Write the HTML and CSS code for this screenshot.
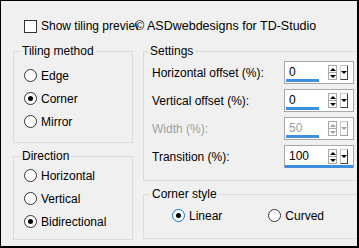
FILE: index.html
```html
<!DOCTYPE html>
<html lang="en">
<head>
  <meta charset="UTF-8" />
  <title>Tiling</title>
  <link rel="stylesheet" href="styles.css">
</head>
<body>
  <div class="window">
    <!-- top row: preview toggle + credit -->
    <div class="top-row">
      <label class="check">
        <span class="box"></span>
        <span class="check-text">Show tiling preview</span>
      </label>
      <span class="credit">© ASDwebdesigns for TD-Studio</span>
    </div>

    <div class="columns">
      <div class="col-left">
        <fieldset class="group tiling">
          <legend>Tiling method</legend>
          <div class="radio"><span class="dot"></span>Edge</div>
          <div class="radio"><span class="dot on"></span>Corner</div>
          <div class="radio"><span class="dot"></span>Mirror</div>
        </fieldset>

        <fieldset class="group direction">
          <legend>Direction</legend>
          <div class="radio"><span class="dot"></span>Horizontal</div>
          <div class="radio"><span class="dot"></span>Vertical</div>
          <div class="radio"><span class="dot on"></span>Bidirectional</div>
        </fieldset>
      </div>

      <div class="col-right">
        <fieldset class="group settings">
          <legend>Settings</legend>
          <div class="field">
            <span class="field-label">Horizontal offset (%):</span>
            <div class="spin">
              <span class="value">0</span>
              <span class="arrows"><i class="up"></i><i class="down"></i></span>
              <span class="drop"><i class="down"></i></span>
              <span class="bar"></span>
            </div>
          </div>
          <div class="field">
            <span class="field-label">Vertical offset (%):</span>
            <div class="spin">
              <span class="value">0</span>
              <span class="arrows"><i class="up"></i><i class="down"></i></span>
              <span class="drop"><i class="down"></i></span>
              <span class="bar"></span>
            </div>
          </div>
          <div class="field disabled">
            <span class="field-label">Width (%):</span>
            <div class="spin">
              <span class="value">50</span>
              <span class="arrows"><i class="up"></i><i class="down"></i></span>
              <span class="drop"><i class="down"></i></span>
              <span class="bar"></span>
            </div>
          </div>
          <div class="field">
            <span class="field-label">Transition (%):</span>
            <div class="spin">
              <span class="value">100</span>
              <span class="arrows"><i class="up"></i><i class="down"></i></span>
              <span class="drop"><i class="down"></i></span>
              <span class="bar full"></span>
            </div>
          </div>
        </fieldset>

        <fieldset class="group corner">
          <legend>Corner style</legend>
          <div class="radio-row">
            <div class="radio"><span class="dot on focus"></span>Linear</div>
            <div class="radio"><span class="dot"></span>Curved</div>
          </div>
        </fieldset>
      </div>
    </div>
  </div>
</body>
</html>
```

FILE: styles.css
```css
body {
  margin: 0;
  font-family: "Liberation Sans", Arial, sans-serif;
  font-size: 12px;
  color: #000;
}

.window {
  width: 359px;
  height: 248px;
  box-sizing: border-box;
  border: 1px solid #000;
  border-right-width: 2px;
  border-bottom-width: 2px;
  background: #f0f0f0;
  overflow: hidden;
  position: relative;
}

/* top row */
.top-row {
  display: flex;
  align-items: center;
  height: 16px;
  margin-top: 17px;
  padding-left: 23px;
}

.check {
  display: flex;
  align-items: center;
  width: 114px;
  overflow: hidden;
  white-space: nowrap;
}

.box {
  flex: none;
  width: 11px;
  height: 11px;
  border: 1px solid #333;
  background: #fff;
  margin-right: 4px;
}

.credit {
  font-size: 12.5px;
  margin-left: -3px;
  white-space: nowrap;
}

/* columns */
.columns {
  display: grid;
  grid-template-columns: 120px 230px;
  column-gap: 10px;
  margin-top: 9px;
  margin-left: 12px;
}

.col-left, .col-right {
  display: flex;
  flex-direction: column;
  gap: 5px;
}

.group {
  margin: 0;
  padding: 0 0 0 10px;
  border: 1px solid #dcdcdc;
  box-sizing: border-box;
  min-width: 0;
}

.group legend {
  padding: 0 2px;
  margin-left: -4px;
  line-height: 16px;
}

.tiling { height: 100px; padding-top: 5px; }
.direction { height: 92px; }
.settings { height: 138px; padding-left: 8px; }
.corner { height: 53px; padding-top: 2px; }

/* radios */
.radio {
  display: flex;
  align-items: center;
  height: 23px;
  white-space: nowrap;
}

.dot {
  flex: none;
  width: 11px;
  height: 11px;
  border: 1px solid #333;
  border-radius: 50%;
  background: #fff;
  margin-right: 4px;
  position: relative;
}

.dot.on::after {
  content: "";
  position: absolute;
  left: 3px;
  top: 3px;
  width: 5px;
  height: 5px;
  border-radius: 50%;
  background: #000;
}

.dot.focus { border-color: #0078d7; }

.radio-row {
  display: flex;
  gap: 46px;
  margin-left: 18px;
}

/* settings fields */
.field {
  display: flex;
  align-items: center;
  justify-content: space-between;
  width: 202px;
  height: 23px;
  margin-bottom: 5px;
}

.field:first-of-type { margin-top: 2px; }

.disabled { color: #a0a0a0; }

.spin {
  position: relative;
  display: flex;
  align-items: center;
  width: 70px;
  height: 23px;
  box-sizing: border-box;
  border: 1px solid #a8a8a8;
  background: #fff;
}

.value {
  flex: 1;
  padding-left: 4px;
  padding-bottom: 2px;
}

.arrows {
  display: flex;
  flex-direction: column;
  width: 9px;
  height: 15px;
  box-sizing: border-box;
  border: 1px solid #a8a8a8;
  margin-right: 3px;
}

.arrows i {
  flex: 1;
  display: flex;
  align-items: center;
  justify-content: center;
}

.arrows i + i { border-top: 1px solid #a8a8a8; }

.up::before, .down::before {
  content: "";
  border-left: 3px solid transparent;
  border-right: 3px solid transparent;
}

.up::before { border-bottom: 3px solid #000; }
.down::before { border-top: 3px solid #000; }

.drop {
  display: flex;
  align-items: center;
  justify-content: center;
  width: 8px;
  height: 15px;
  box-sizing: border-box;
  border: 1px solid #c8c8c8;
  border-right-color: #404040;
  border-bottom-color: #404040;
  margin-right: 5px;
}

.drop i { display: flex; }

.disabled .up::before { border-bottom-color: #a0a0a0; }
.disabled .down::before { border-top-color: #a0a0a0; }
.disabled .drop { border-right-color: #a0a0a0; border-bottom-color: #a0a0a0; }

.bar {
  position: absolute;
  left: 1px;
  bottom: 1px;
  width: 33px;
  height: 3px;
  background: #3c8fdf;
}

.bar.full {
  left: 0;
  right: 0;
  width: auto;
  bottom: -1px;
}
```
